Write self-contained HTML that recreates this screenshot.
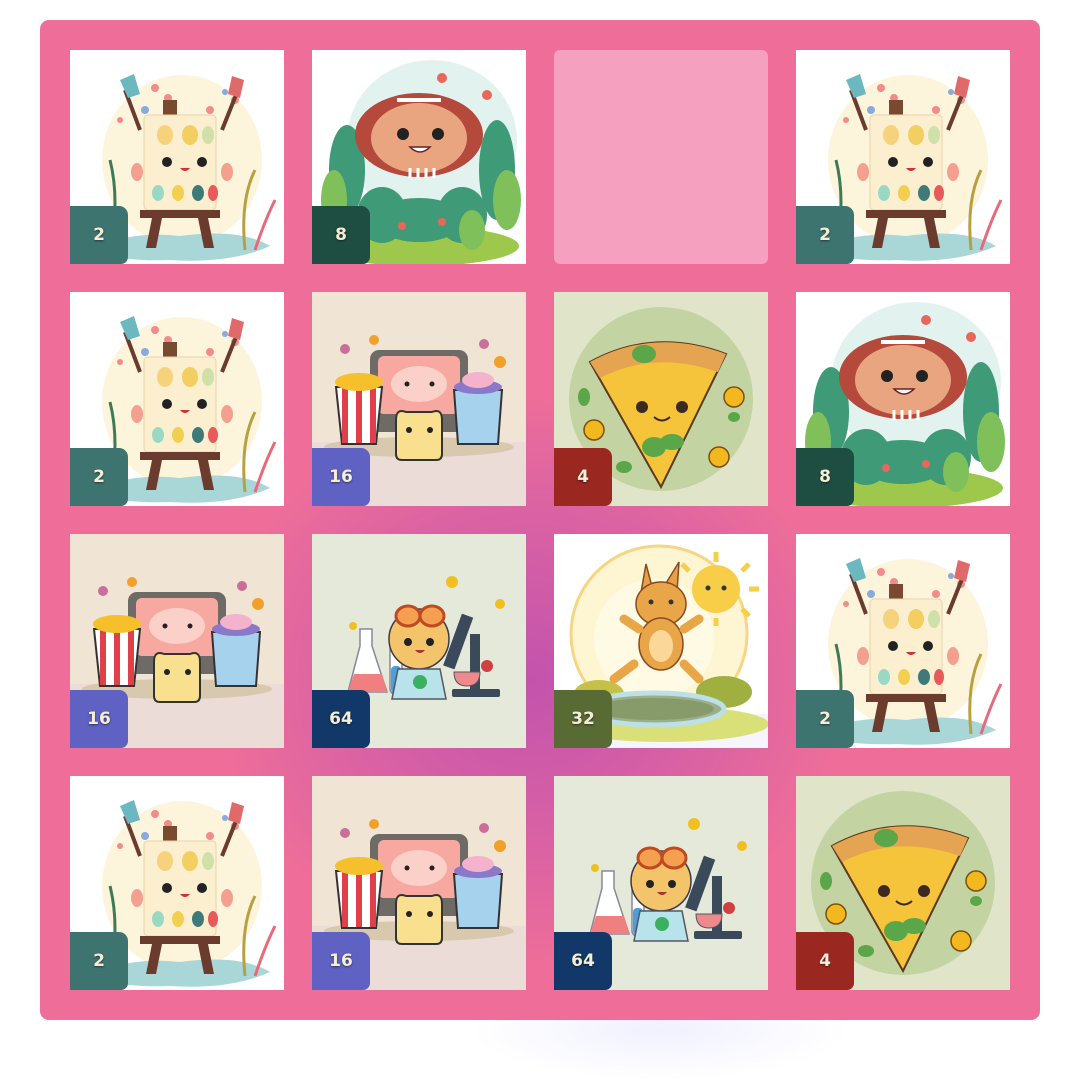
<!DOCTYPE html>
<html><head><meta charset="utf-8">
<style>
html,body{margin:0;padding:0;background:#fff;width:1080px;height:1044px;overflow:hidden;font-family:"Liberation Sans",sans-serif}
.glow2{position:absolute;left:470px;top:980px;width:380px;height:100px;border-radius:50%;background:radial-gradient(ellipse at center,rgba(225,226,255,.5),rgba(255,255,255,0) 70%)}
.board{position:absolute;left:40px;top:20px;width:1000px;height:1000px;border-radius:9px;background:#ee6e99;overflow:hidden}
.board:before{content:"";position:absolute;left:180px;top:380px;width:620px;height:560px;border-radius:50%;background:radial-gradient(ellipse at center,rgba(190,80,175,.9) 0%,rgba(205,90,170,.55) 45%,rgba(238,110,153,0) 72%)}
.t{position:absolute;width:214px;height:214px;overflow:hidden}
.t svg{position:absolute;left:0;top:0;width:214px;height:214px}
.b{position:absolute;left:0;bottom:0;width:58px;height:58px;border-radius:0 9px 7px 0;color:#f5eed6;font-family:"DejaVu Sans","Liberation Sans",sans-serif;font-weight:bold;font-size:17px;line-height:58px;text-align:center;text-shadow:0 1px 2px rgba(0,0,0,.5)}
.empty{background:#f4a0be;border-radius:6px}
</style></head><body>
<svg width="0" height="0" style="position:absolute">
<defs>
<symbol id="easel" viewBox="0 0 214 214">
<rect width="214" height="214" fill="#fff"/>
<ellipse cx="112" cy="110" rx="80" ry="85" fill="#fdf4dc"/>
<path d="M20 200 Q60 180 110 186 Q170 178 200 196 Q160 214 100 210 Q50 212 20 200Z" fill="#a9d7d8"/>
<g fill="#f28c8c"><circle cx="85" cy="38" r="4"/><circle cx="98" cy="48" r="4"/><circle cx="140" cy="60" r="4"/><circle cx="50" cy="70" r="3"/><circle cx="165" cy="50" r="4"/></g>
<g fill="#8ad" ><circle cx="75" cy="60" r="4"/><circle cx="155" cy="42" r="3"/></g>
<path d="M70 80 L55 40" stroke="#6b3b2d" stroke-width="4"/><path d="M50 30 l14 -6 l6 20 l-12 4z" fill="#6bb8c0"/>
<path d="M152 80 L168 40" stroke="#6b3b2d" stroke-width="4"/><path d="M162 26 l12 4 l-4 18 l-12 -4z" fill="#e06a6a"/>
<path d="M40 200 Q50 150 40 110" stroke="#3d7a55" stroke-width="3" fill="none"/>
<path d="M175 200 Q170 150 185 120" stroke="#b8a040" stroke-width="3" fill="none"/>
<path d="M185 200 Q195 170 205 150" stroke="#e86a7a" stroke-width="3" fill="none"/>
<rect x="93" y="50" width="14" height="20" fill="#7a4a30"/>
<rect x="74" y="65" width="72" height="95" rx="4" fill="#fbefcf" stroke="#e8d4a8"/>
<g><ellipse cx="95" cy="85" rx="8" ry="10" fill="#f7d27c"/><ellipse cx="120" cy="85" rx="8" ry="10" fill="#f3cf62"/><ellipse cx="138" cy="85" rx="6" ry="9" fill="#cfe0a8"/>
<ellipse cx="88" cy="143" rx="6" ry="8" fill="#9ad8c6"/><ellipse cx="108" cy="143" rx="6" ry="8" fill="#f3cf50"/><ellipse cx="128" cy="143" rx="6" ry="8" fill="#3d7a78"/><ellipse cx="143" cy="143" rx="5" ry="8" fill="#e85a5a"/></g>
<circle cx="97" cy="112" r="5" fill="#222"/><circle cx="132" cy="112" r="5" fill="#222"/>
<path d="M110 118 q5 6 10 0z" fill="#c33"/>
<ellipse cx="67" cy="122" rx="6" ry="9" fill="#f4a08f"/><ellipse cx="157" cy="122" rx="6" ry="9" fill="#f4a08f"/>
<rect x="70" y="160" width="80" height="8" fill="#6b3b2d"/>
<path d="M82 168 L76 198 L86 198 L92 168Z M128 168 L134 198 L144 198 L138 168Z" fill="#6b3b2d"/>
</symbol>
<symbol id="ball" viewBox="0 0 214 214">
<rect width="214" height="214" fill="#fff"/>
<ellipse cx="120" cy="90" rx="85" ry="80" fill="#e2f3ef"/>
<ellipse cx="107" cy="196" rx="100" ry="20" fill="#9dc84c"/>
<g fill="#3f9a78"><ellipse cx="35" cy="120" rx="18" ry="45"/><ellipse cx="185" cy="120" rx="18" ry="50"/><ellipse cx="70" cy="165" rx="25" ry="28"/><ellipse cx="150" cy="165" rx="25" ry="28"/><ellipse cx="107" cy="170" rx="45" ry="22"/></g>
<g fill="#7fc05a"><ellipse cx="22" cy="150" rx="13" ry="30"/><ellipse cx="195" cy="150" rx="14" ry="30"/><ellipse cx="160" cy="180" rx="13" ry="20"/></g>
<g fill="#e8675a"><circle cx="130" cy="172" r="4"/><circle cx="90" cy="176" r="4"/><circle cx="130" cy="28" r="5"/><circle cx="175" cy="45" r="5"/></g>
<ellipse cx="107" cy="85" rx="64" ry="42" fill="#b5493c"/>
<ellipse cx="107" cy="88" rx="48" ry="35" fill="#e8a580"/>
<path d="M85 50 h44" stroke="#fff" stroke-width="4"/>
<circle cx="91" cy="84" r="6" fill="#222"/><circle cx="126" cy="84" r="6" fill="#222"/>
<path d="M98 97 q10 10 20 0z" fill="#fff" stroke="#622" stroke-width="1.5"/>
<g stroke="#fff" stroke-width="3"><path d="M98 118v10M106 118v10M114 118v10M122 118v10"/></g>
</symbol>
<symbol id="pop" viewBox="0 0 214 214">
<rect width="214" height="214" fill="#f0e4d4"/>
<rect y="150" width="214" height="64" fill="#ecdcd8"/>
<ellipse cx="107" cy="155" rx="95" ry="10" fill="#d8c8ae"/>
<rect x="58" y="58" width="98" height="82" rx="9" fill="#6e6a66"/>
<rect x="66" y="64" width="82" height="58" rx="6" fill="#f7a8a0"/>
<ellipse cx="107" cy="92" rx="28" ry="18" fill="#fbd0c8"/>
<g fill="#f1a02a"><circle cx="62" cy="48" r="5"/><circle cx="188" cy="70" r="6"/></g>
<g fill="#ca6e9a"><circle cx="33" cy="57" r="5"/><circle cx="172" cy="52" r="5"/></g>
<path d="M24 95 L70 95 L64 152 L30 152Z" fill="#fff" stroke="#333" stroke-width="2"/>
<g fill="#e0404a"><rect x="30" y="96" width="6" height="55"/><rect x="44" y="96" width="6" height="55"/><rect x="58" y="96" width="6" height="55"/></g>
<ellipse cx="47" cy="90" rx="24" ry="9" fill="#f6c02c"/>
<path d="M142 98 L190 98 L186 152 L146 152Z" fill="#a7d2ee" stroke="#333" stroke-width="2"/>
<ellipse cx="166" cy="95" rx="24" ry="7" fill="#8a78c8"/>
<ellipse cx="166" cy="88" rx="16" ry="8" fill="#f4b2cc"/>
<path d="M84 128 q0 -12 10 -8 h26 q10 -4 10 8 v34 q0 6 -6 6 h-34 q-6 0 -6 -6z" fill="#f8e08e" stroke="#333" stroke-width="2"/>
<circle cx="97" cy="138" r="3" fill="#222"/><circle cx="118" cy="138" r="3" fill="#222"/>
<circle cx="95" cy="92" r="2.5" fill="#222"/><circle cx="120" cy="92" r="2.5" fill="#222"/>
</symbol>
<symbol id="pizza" viewBox="0 0 214 214">
<rect width="214" height="214" fill="#e0e5ca"/>
<circle cx="107" cy="107" r="92" fill="#c3d3a2"/>
<path d="M36 70 Q100 35 172 62 L107 195Z" fill="#f6c43a" stroke="#5a3a20" stroke-width="2"/>
<path d="M36 70 Q100 35 172 62 L164 80 Q100 58 46 86Z" fill="#e4a452"/>
<circle cx="88" cy="115" r="6" fill="#3a2a20"/><circle cx="128" cy="115" r="6" fill="#3a2a20"/>
<path d="M100 125 q8 7 16 0" stroke="#3a2a20" stroke-width="2" fill="none"/>
<g fill="#5aa648"><ellipse cx="90" cy="62" rx="12" ry="9"/><ellipse cx="100" cy="155" rx="12" ry="10"/><ellipse cx="118" cy="150" rx="12" ry="8"/><ellipse cx="30" cy="105" rx="6" ry="9"/><ellipse cx="70" cy="175" rx="8" ry="6"/><ellipse cx="180" cy="125" rx="6" ry="5"/></g>
<g fill="#f3b81e" stroke="#7a5010" stroke-width="1.5"><circle cx="40" cy="138" r="10"/><circle cx="180" cy="105" r="10"/><circle cx="165" cy="165" r="10"/></g>
</symbol>
<symbol id="sci" viewBox="0 0 214 214">
<rect width="214" height="214" fill="#e4e9da"/>
<g fill="#f0c020"><circle cx="140" cy="48" r="6"/><circle cx="188" cy="70" r="5"/><circle cx="41" cy="92" r="4"/></g>
<path d="M48 95 L60 95 L60 112 L75 158 L36 158 L48 112Z" fill="#fff" stroke="#889" stroke-width="1.5"/>
<path d="M42 140 L70 140 L75 158 L36 158Z" fill="#f08080"/>
<rect x="78" y="110" width="12" height="50" rx="5" fill="#fff" stroke="#889" stroke-width="1.5"/>
<rect x="79" y="132" width="10" height="27" rx="4" fill="#4aa0d8"/>
<circle cx="107" cy="105" r="30" fill="#f3c46a" stroke="#3a3a4a" stroke-width="1.5"/>
<ellipse cx="96" cy="82" rx="12" ry="10" fill="#f4a050" stroke="#c04a20" stroke-width="3"/><ellipse cx="120" cy="82" rx="12" ry="10" fill="#f4a050" stroke="#c04a20" stroke-width="3"/>
<circle cx="96" cy="108" r="4" fill="#222"/><circle cx="118" cy="108" r="4" fill="#222"/>
<path d="M103 116 q5 6 10 0z" fill="#a33"/>
<path d="M86 135 L128 135 L134 165 L80 165Z" fill="#b9e3ea" stroke="#556" stroke-width="1.5"/>
<circle cx="108" cy="148" r="7" fill="#3ab060"/>
<rect x="140" y="80" width="12" height="55" fill="#3a4a5a" transform="rotate(20 146 108)"/>
<rect x="158" y="100" width="10" height="55" fill="#3a4a5a"/>
<rect x="140" y="155" width="48" height="8" rx="2" fill="#3a4a5a"/>
<path d="M142 138 h26 q0 14 -13 14 q-13 0 -13 -14z" fill="#f08a8a" stroke="#556"/>
<circle cx="175" cy="132" r="6" fill="#d04040"/>
</symbol>
<symbol id="kang" viewBox="0 0 214 214">
<rect width="214" height="214" fill="#fff"/>
<rect y="180" width="214" height="34" fill="#f6f4fc"/>
<circle cx="105" cy="100" r="88" fill="#fef6d2" stroke="#f6d684" stroke-width="3"/>
<circle cx="100" cy="105" r="60" fill="#fffae4"/>
<ellipse cx="110" cy="190" rx="105" ry="18" fill="#d9e078"/>
<ellipse cx="45" cy="160" rx="25" ry="14" fill="#c4c048"/><ellipse cx="170" cy="158" rx="28" ry="16" fill="#a0b040"/>
<ellipse cx="100" cy="175" rx="70" ry="16" fill="#9bb08a" stroke="#bde0e8" stroke-width="5"/>
<ellipse cx="100" cy="175" rx="60" ry="11" fill="#879a6a"/>
<circle cx="162" cy="55" r="24" fill="#f8ce48"/>
<g stroke="#f8ce48" stroke-width="5"><path d="M162 18v10M195 30l-7 7M205 55h-10M195 82l-7-7M162 92v-8M128 30l7 7"/></g>
<circle cx="154" cy="54" r="2.5" fill="#333"/><circle cx="170" cy="54" r="2.5" fill="#333"/>
<path d="M92 30 l8 30 l-14 4z M125 28 l-2 30 l-14 -4z" fill="#e7a048" stroke="#8a4a20" stroke-width="1.5"/>
<ellipse cx="107" cy="70" rx="25" ry="22" fill="#e9a648" stroke="#8a4a20" stroke-width="1.5"/>
<ellipse cx="107" cy="110" rx="22" ry="26" fill="#e9a648" stroke="#8a4a20" stroke-width="1.5"/>
<ellipse cx="107" cy="112" rx="12" ry="16" fill="#fbd89a"/>
<path d="M80 130 l-20 15 M130 130 l15 15 M85 95 l-15 -10 M130 95 l15 -10" stroke="#e9a648" stroke-width="9" stroke-linecap="round"/>
<circle cx="97" cy="68" r="2.5" fill="#333"/><circle cx="117" cy="68" r="2.5" fill="#333"/>
</symbol>
</defs></svg>
<div class="glow2"></div>
<div class="board">
<div class="t" style="left:30px;top:30px"><svg><use href="#easel"/></svg><div class="b" style="background:#3e7470">2</div></div>
<div class="t" style="left:272px;top:30px"><svg><use href="#ball"/></svg><div class="b" style="background:#1e4e42">8</div></div>
<div class="t empty" style="left:514px;top:30px"></div>
<div class="t" style="left:756px;top:30px"><svg><use href="#easel"/></svg><div class="b" style="background:#3e7470">2</div></div>

<div class="t" style="left:30px;top:272px"><svg><use href="#easel"/></svg><div class="b" style="background:#3e7470">2</div></div>
<div class="t" style="left:272px;top:272px"><svg><use href="#pop"/></svg><div class="b" style="background:#5f62c2">16</div></div>
<div class="t" style="left:514px;top:272px"><svg><use href="#pizza"/></svg><div class="b" style="background:#9a2820">4</div></div>
<div class="t" style="left:756px;top:272px"><svg><use href="#ball"/></svg><div class="b" style="background:#1e4e42">8</div></div>

<div class="t" style="left:30px;top:514px"><svg><use href="#pop"/></svg><div class="b" style="background:#5f62c2">16</div></div>
<div class="t" style="left:272px;top:514px"><svg><use href="#sci"/></svg><div class="b" style="background:#12386a">64</div></div>
<div class="t" style="left:514px;top:514px"><svg><use href="#kang"/></svg><div class="b" style="background:#586b34">32</div></div>
<div class="t" style="left:756px;top:514px"><svg><use href="#easel"/></svg><div class="b" style="background:#3e7470">2</div></div>

<div class="t" style="left:30px;top:756px"><svg><use href="#easel"/></svg><div class="b" style="background:#3e7470">2</div></div>
<div class="t" style="left:272px;top:756px"><svg><use href="#pop"/></svg><div class="b" style="background:#5f62c2">16</div></div>
<div class="t" style="left:514px;top:756px"><svg><use href="#sci"/></svg><div class="b" style="background:#12386a">64</div></div>
<div class="t" style="left:756px;top:756px"><svg><use href="#pizza"/></svg><div class="b" style="background:#9a2820">4</div></div>
</div>
</body></html>
